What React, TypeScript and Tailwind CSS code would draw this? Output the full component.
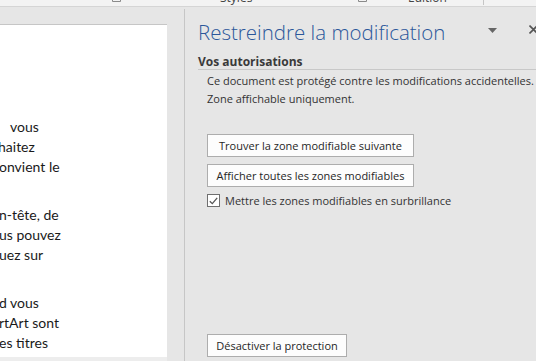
import React from 'react';

const uiFont = { fontFamily: '"Open Sans", "Noto Sans", sans-serif' };
const docFont = { fontFamily: 'Lato, "Open Sans", sans-serif' };

// visible (clipped) part of the document paragraphs, the page is scrolled right
const paragraphs: { text: string; offset: string }[][] = [
  [
    { text: 'vous', offset: 'ml-[10px]' },
    { text: 'haitez', offset: 'ml-[-2px]' },
    { text: 'onvient le', offset: 'ml-[-1px]' },
  ],
  [
    { text: 'n-tête, de', offset: 'ml-[-1px]' },
    { text: 'us pouvez', offset: 'ml-[-1px]' },
    { text: 'uez sur', offset: 'ml-[-1px]' },
  ],
  [
    { text: 'd vous', offset: 'ml-[-1px]' },
    { text: 'rtArt sont', offset: 'ml-[-1px]' },
    { text: 'es titres', offset: 'ml-[-1px]' },
  ],
];

function Launcher() {
  return (
    <svg width="9" height="7" viewBox="0 0 9 7" className="shrink-0">
      <path d="M0.5 0 V3.5 H8.5 V0" fill="none" stroke="#8a8a8a" strokeWidth="1" />
    </svg>
  );
}

function Button({ label, width }: { label: string; width: string }) {
  return (
    <button
      className={`${width} h-[23px] bg-[#fdfdfd] border border-[#adadad] text-[11px] text-[#262626] leading-none flex items-center justify-center`}
      style={uiFont}
    >
      {label}
    </button>
  );
}

export default function App() {
  return (
    <div className="w-[536px] h-[361px] bg-[#e6e6e6] flex flex-col overflow-hidden">
      {/* ribbon bottom edge, group labels cut off */}
      <div className="h-[7px] bg-[#f3f3f3] border-b border-[#d5d5d5] overflow-hidden flex items-start text-[12px] text-[#444]" style={uiFont}>
        <div className="w-[112px] shrink-0" />
        <div className="mt-[-2px]"><Launcher /></div>
        <div className="w-[99px] shrink-0" />
        <div className="w-[138px] shrink-0 mt-[-10px] leading-[16px]">Styles</div>
        <div className="mt-[-2px]"><Launcher /></div>
        <div className="w-[41px] shrink-0" />
        <div className="w-[75px] shrink-0 mt-[-10px] leading-[16px]">Édition</div>
        <div className="w-px h-[5px] bg-[#c6c6c6]" />
      </div>

      <div className="flex flex-1 min-h-0">
        {/* document area */}
        <div className="w-[184px] shrink-0 pt-[17px] flex flex-col">
          <div className="w-[167px] h-[333px] bg-white border-t border-[#c6c6c6] overflow-hidden pt-[92px] text-[14px] leading-[20px] text-[#1a1a1a]" style={docFont}>
            {paragraphs.map((p, i) => (
              <div key={i} className="mb-[28px]">
                {p.map((l) => (
                  <div key={l.text} className={`${l.offset} whitespace-nowrap`}>
                    {l.text}
                  </div>
                ))}
              </div>
            ))}
          </div>
          <div className="w-[167px] flex-1 bg-[#ededed]" />
        </div>

        <div className="w-px bg-[#c6c6c6] mt-[2px] shrink-0" />

        {/* task pane */}
        <div className="flex-1 pl-[13px] flex flex-col pb-[4px] text-[#333]" style={uiFont}>
          <div className="flex items-start pt-[11px] h-[39px]">
            <div className="text-[20.5px] font-light leading-[28px] text-[#2b579a] whitespace-nowrap">
              Restreindre la modification
            </div>
            <svg width="9" height="5" viewBox="0 0 9 5" className="ml-auto mt-[10px] shrink-0">
              <path d="M0 0 H9 L4.5 5 Z" fill="#666" />
            </svg>
            <svg width="9" height="9" viewBox="0 0 9 9" className="ml-[32px] mr-[-2px] mt-[7px] shrink-0">
              <path d="M0.5 0.5 L8.5 8.5 M8.5 0.5 L0.5 8.5" stroke="#555" strokeWidth="1.6" />
            </svg>
          </div>

          <div className="mt-[8px] text-[12px] font-bold leading-[15px] border-b border-[#c8c8c8] text-[#3a3a3a]">
            Vos autorisations
          </div>

          <div className="pl-[9px] mt-[2px] text-[11px] leading-[18px] whitespace-nowrap">
            <div>Ce document est protégé contre les modifications accidentelles.</div>
            <div>Zone affichable uniquement.</div>
          </div>

          <div className="pl-[9px] mt-[26px] flex flex-col gap-[7px]">
            <Button label="Trouver la zone modifiable suivante" width="w-[207px]" />
            <Button label="Afficher toutes les zones modifiables" width="w-[207px]" />
          </div>

          <label className="pl-[9px] mt-[7px] flex items-center gap-[5px] text-[11px] leading-[13px]">
            <span className="w-[13px] h-[13px] bg-white border border-[#6f6f6f] flex items-center justify-center shrink-0">
              <svg width="9" height="8" viewBox="0 0 9 8">
                <path d="M0.8 4.2 L3.3 6.6 L8.2 0.8" fill="none" stroke="#555" strokeWidth="1.3" />
              </svg>
            </span>
            <span className="whitespace-nowrap">Mettre les zones modifiables en surbrillance</span>
          </label>

          <div className="mt-auto pl-[9px]">
            <Button label="Désactiver la protection" width="w-[140px]" />
          </div>
        </div>
      </div>
    </div>
  );
}
